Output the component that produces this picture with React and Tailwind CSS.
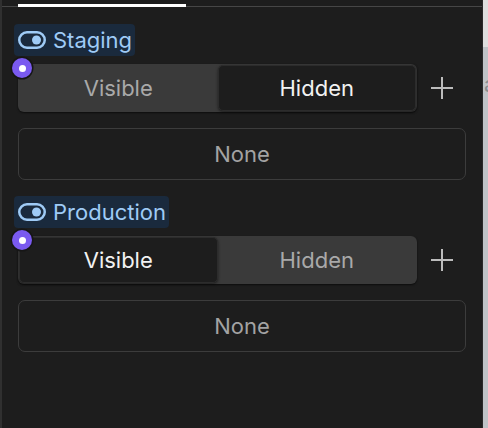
import React from "react";

function ToggleIcon() {
  return (
    <svg width="28" height="18" viewBox="0 0 28 18" fill="none">
      <rect x="1.25" y="1.25" width="25.5" height="15.5" rx="7.75" stroke="#9fcbf6" strokeWidth="2.5" />
      <circle cx="18.5" cy="9" r="4.5" fill="#9fcbf6" />
    </svg>
  );
}

function PlusIcon() {
  return (
    <svg width="24" height="24" viewBox="0 0 24 24">
      <path d="M12 1v22M1 12h22" stroke="#bcbcbc" strokeWidth="2" />
    </svg>
  );
}

function Segmented({ selected }) {
  const opts = ["Visible", "Hidden"];
  return (
    <div className="relative w-[399px] h-[48px] rounded-[6px] bg-[#3a3a3a] p-[1px] grid grid-cols-2 shadow-[0_1px_2px_rgba(0,0,0,0.6)]">
      {opts.map((o) => (
        <div
          key={o}
          className={
            o === selected
              ? "flex items-center justify-center rounded-[5px] bg-[#1d1d1d] border border-[#2c2c2c] text-[#f2f2f2] shadow-[0_1px_3px_rgba(0,0,0,0.5)]"
              : "flex items-center justify-center text-[#a9a9a9]"
          }
        >
          {o}
        </div>
      ))}
      <div className="absolute -left-[6px] -top-[6px] w-[20px] h-[20px] rounded-full bg-[#7a5af0] flex items-center justify-center shadow-[0_0_0_1.5px_#161616]">
        <div className="w-[7px] h-[7px] rounded-full bg-white" />
      </div>
    </div>
  );
}

function Block({ name, selected }) {
  return (
    <div className="flex flex-col">
      <div className="self-start h-[32px] flex items-center gap-[7px] pl-[4px] pr-[3px] rounded-[4px] bg-[#1a2a3d] text-[#9fcbf6]">
        <ToggleIcon />
        <span>{name}</span>
      </div>
      <div className="ml-[4px] mt-[8px] flex items-center">
        <Segmented selected={selected} />
        <div className="flex-1 flex items-center justify-center">
          <PlusIcon />
        </div>
      </div>
      <div className="ml-[4px] mt-[16px] h-[52px] rounded-[7px] border-[1.5px] border-[#3c3c3c] flex items-center justify-center text-[#a3a3a3]">
        None
      </div>
    </div>
  );
}

export default function App() {
  return (
    <div
      className="w-[488px] h-[428px] flex bg-[#1d1d1d] overflow-hidden text-[22px]"
      style={{ fontFamily: "Inter, 'Noto Sans', sans-serif" }}
    >
      <div className="flex-1 border-l-2 border-[#303030] border-r border-r-[#2a2a2a] flex flex-col">
        <div className="h-[7px] border-b border-[#464646] pl-[16px]">
          <div className="mt-[4px] h-[3px] w-[168px] bg-white" />
        </div>
        <div className="pl-[12px] pr-[16px] pt-[17px] flex flex-col gap-[16px]">
          <Block name="Staging" selected="Hidden" />
          <Block name="Production" selected="Visible" />
        </div>
      </div>
      <div className="w-[5px] flex flex-col bg-[#bfc3c7] overflow-hidden">
        <div className="h-[47px] bg-[#dedede]" />
        <div className="mt-[26px] text-[#8a8d90] leading-none pl-[1px]">a</div>
      </div>
    </div>
  );
}
